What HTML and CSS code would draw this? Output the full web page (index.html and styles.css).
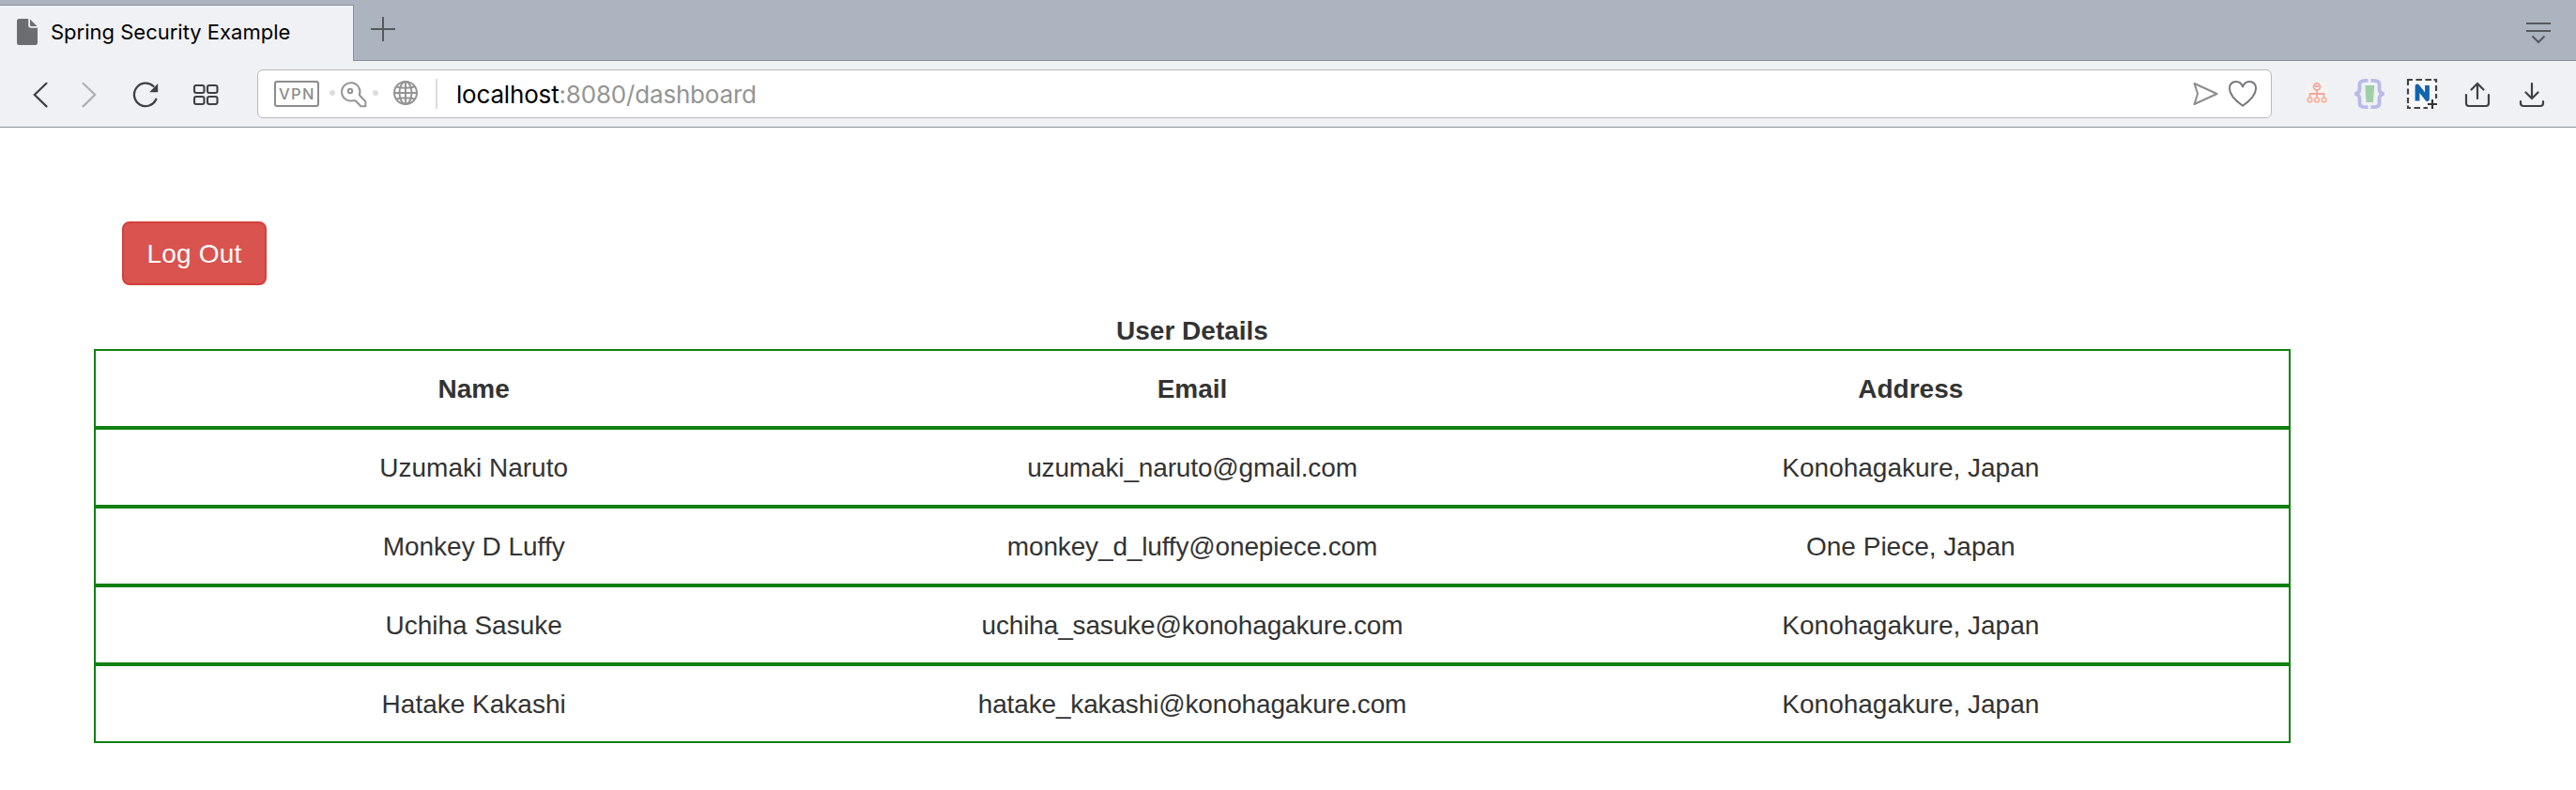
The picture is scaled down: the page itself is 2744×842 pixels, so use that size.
FILE: index.html
```html
<!DOCTYPE html>
<html lang="en">
<head>
<meta charset="utf-8">
<title>Spring Security Example</title>
<link rel="stylesheet" href="styles.css">
</head>
<body>
<header class="browser">
  <div class="tabstrip">
    <div class="tab">
      <svg class="doc" width="22" height="28" viewBox="18 20 22 28"><path fill="#6c6d70" d="M20.500 20H30.200V27Q30.200 29.800 33 29.800H40V45.500Q40 48 37.500 48H20.500Q18 48 18 45.500V22.500Q18 20 20.500 20ZM32 20.500L39.500 28H33.500Q32 28 32 26.500Z"/></svg>
      <span class="tab-title">Spring Security Example</span>
    </div>
    <svg class="plus" width="26" height="26" viewBox="395 18 26 26"><path d="M395 31H421M408 18V44" stroke="#55585d" stroke-width="2"/></svg>
    <svg class="menu" width="28" height="24" viewBox="2690 23 28 24"><path d="M2691 25H2717M2691 33H2717M2697.500 38.500L2704 45L2710.500 38.500" fill="none" stroke="#55585d" stroke-width="2"/></svg>
  </div>
  <div class="toolbar">
    <svg class="nav" width="20" height="40" viewBox="34 80 20 40"><path d="M49.500 88.800L36.800 101L49.500 113.400" fill="none" stroke="#3f4043" stroke-width="2.200" stroke-linecap="round"/></svg>
    <svg class="nav forward" width="20" height="40" viewBox="86 80 20 40"><path d="M88.500 88.800L101.200 101L88.500 113.400" fill="none" stroke="#adafb1" stroke-width="2.200" stroke-linecap="round"/></svg>
    <svg class="nav reload" width="30" height="40" viewBox="140 80 30 40"><path d="M163.500 92A12.200 12.200 0 1 0 166.300 105.800" fill="none" stroke="#3f4043" stroke-width="2.300" stroke-linecap="round"/><path d="M168.200 89V98.200H159.200Z" fill="#3f4043"/></svg>
    <svg class="nav grid" width="30" height="40" viewBox="204 80 30 40"><g fill="none" stroke="#3f4043" stroke-width="2.100"><rect x="207" y="91" width="10.500" height="8" rx="2"/><rect x="221" y="91" width="10.500" height="8" rx="2"/><rect x="207" y="103" width="10.500" height="8" rx="2"/><rect x="221" y="103" width="10.500" height="8" rx="2"/></g></svg>
    <div class="address">
      <span class="vpn">VPN</span>
      <svg class="site" width="100" height="40" viewBox="350 80 100 40"><g fill="none" stroke="#949494" stroke-width="2"><g fill="#dcdde0" stroke="none"><circle cx="354" cy="99" r="3"/><circle cx="400" cy="99" r="3"/></g><path stroke-linejoin="round" d="M376.300 107.200A9.700 9.700 0 1 1 382.800 101.300L389.400 108.300V113.300H384.500L378.600 107.200Z"/><circle cx="373" cy="97" r="2.200"/><circle cx="432" cy="99" r="12"/><ellipse cx="432" cy="99" rx="6.500" ry="12"/><path d="M432 87V111M420 99H444M422.500 92.500Q432 95 441.500 92.500M422.500 105.500Q432 103 441.500 105.500"/></g></svg>
      <span class="divider"></span>
      <span class="url">localhost<span class="path">:8080/dashboard</span></span>
      <svg class="actions" width="74" height="40" viewBox="2334 80 74 40"><g fill="none" stroke="#8c8c8e" stroke-width="2" stroke-linejoin="round"><path d="M2337.500 89L2361.500 100L2337.500 111L2341 100Z"/><path stroke="#77787a" d="M2389 112.800C2383 108.500 2375 101.500 2375 94.500C2375 89.500 2378 87 2382 87Q2387 87 2389 92.500Q2391 87 2396 87C2400 87 2403 89.500 2403 94.500C2403 101.500 2395 108.500 2389 112.800Z"/></g></svg>
    </div>
    <svg class="ext tree" width="24" height="40" viewBox="2456 80 24 40"><rect x="2456" y="88" width="24" height="23" rx="4" fill="#f5f3f2"/><g fill="none" stroke="#f0a79b" stroke-width="1.800"><circle cx="2468" cy="92.500" r="3.500"/><path d="M2468 96V104M2460.500 104V100H2475.500V104M2466 92H2470"/><g stroke="#f4b49f"><circle cx="2460.500" cy="106.500" r="2.300"/><circle cx="2468" cy="106.500" r="2.300"/><circle cx="2475.500" cy="106.500" r="2.300"/></g></g></svg>
    <svg class="ext braces" width="32" height="40" viewBox="2508 80 32 40"><path d="M2522.500 85.800H2519.500Q2513.500 85.800 2513.500 90V95Q2513.500 99 2508.500 100Q2513.500 101 2513.500 105V110Q2513.500 114.200 2519.500 114.200H2522.500M2525.500 85.800H2528.500Q2534.500 85.800 2534.500 90V95Q2534.500 99 2539.500 100Q2534.500 101 2534.500 105V110Q2534.500 114.200 2528.500 114.200H2525.500" fill="none" stroke="#b9b9ea" stroke-width="3.800"/><path d="M2519.300 91H2529.200L2528 109H2520.500Z" fill="#9fcfa8"/></svg>
    <svg class="ext clip" width="34" height="40" viewBox="2563 80 34 40"><path fill="#fff" fill-opacity=".5" d="M2565 85H2595V115H2565Z"/><path d="M2565 91V85H2570M2573.500 85H2580M2583.500 85H2590M2592.500 85H2595V88M2565 94.500V100.500M2565 104V110M2565 112.500V115H2568M2571.500 115H2578M2595 91V97M2595 100V105M2581.500 115H2586" fill="none" stroke="#444" stroke-width="2.200"/><path d="M2575 107.500V92L2585.500 105.500V91" fill="none" stroke="#1265ad" stroke-width="4.800" stroke-linejoin="round"/><path d="M2591 106V116M2586 111H2596" stroke="#333" stroke-width="2.200"/></svg>
    <svg class="ext upload" width="28" height="40" viewBox="2625 80 28 40"><path d="M2627 101V110Q2627 113 2630 113H2648Q2651 113 2651 110V101M2639 105V89M2632.500 95.500L2639 89L2645.500 95.500" fill="none" stroke="#3f4043" stroke-width="2.200" stroke-linecap="round"/></svg>
    <svg class="ext download" width="28" height="40" viewBox="2683 80 28 40"><path d="M2685 108V110Q2685 113 2688 113H2706Q2709 113 2709 110V108M2697 89V105M2690.500 98.500L2697 105L2703.500 98.500" fill="none" stroke="#3f4043" stroke-width="2.200" stroke-linecap="round"/></svg>
  </div>
</header>
<main class="page">
  <button class="logout" type="button">Log Out</button>
  <section class="users">
    <h1 class="caption">User Details</h1>
    <div class="row head"><span>Name</span><span>Email</span><span>Address</span></div>
    <div class="row"><span>Uzumaki Naruto</span><span class="email">uzumaki_naruto@gmail.com</span><span>Konohagakure, Japan</span></div>
    <div class="row"><span>Monkey D Luffy</span><span class="email">monkey_d_luffy@onepiece.com</span><span>One Piece, Japan</span></div>
    <div class="row"><span>Uchiha Sasuke</span><span class="email">uchiha_sasuke@konohagakure.com</span><span>Konohagakure, Japan</span></div>
    <div class="row"><span>Hatake Kakashi</span><span class="email">hatake_kakashi@konohagakure.com</span><span>Konohagakure, Japan</span></div>
  </section>
</main>
</body>
</html>
```
FILE: styles.css
```css
* { box-sizing: border-box; }
body { margin: 0; background: #fff; color: #333; font: 28px/40px "Liberation Sans", Arial, sans-serif; }
svg { display: block; flex: none; }
.browser { font-family: Inter, sans-serif; }
.tabstrip { display: flex; height: 65px; background: #abb4bf; border-bottom: 1px solid #87909b; }
.tab { display: flex; width: 377px; height: 60px; margin-top: 5px; padding: 15px 0 0 18px; background: #f0f1f4; border: solid #87909b; border-width: 1px 1px 0 0; }
.doc { margin-top: -1px; }
.tab-title { margin: -1px 0 0 14px; color: #000; font-size: 22px; line-height: 28px; white-space: nowrap; }
.plus { margin: 18px 0 0 18px; }
.menu { margin: 23px 26px 0 auto; }
.toolbar { display: flex; align-items: center; height: 71px; padding: 0 33px 0 34px; background: #f0f1f4; border-bottom: 1px solid #87909b; }
.forward { margin-left: 32px; }
.reload { margin-left: 34px; }
.grid { margin-left: 34px; }
.address { display: flex; flex: none; align-items: center; width: 2146px; height: 52px; margin-left: 40px; padding: 0 11px 0 17px; background: #fff; border: 1px solid #b8babe; border-radius: 6px; }
.vpn { width: 48px; height: 28px; border: 2px solid #8c8c8c; border-radius: 3px; color: #8c8c8c; font-size: 16.5px; font-weight: 500; line-height: 25px; letter-spacing: 1.3px; padding-left: 3px; }
.site { margin-left: 10px; }
.divider { width: 2px; height: 32px; margin-left: 14px; background: #dcdcdc; }
.url { margin-left: 20px; padding-top: 2px; color: #000; font-size: 26px; letter-spacing: -.18px; white-space: nowrap; }
.path { color: #949494; }
.actions { margin-left: auto; }
.tree { margin-left: 36px; }
.braces { margin-left: 28px; }
.clip { margin-left: 23px; }
.upload { margin-left: 28px; }
.download { margin-left: 30px; }
.page { padding: 100px 304px 50px 100px; }
.logout { display: block; width: 154px; height: 68px; margin-left: 30px; padding: 1px 0 0; background: #d9534f; border: 2px solid #d43f3a; border-radius: 8px; color: #fff; font: inherit; letter-spacing: .2px; }
.users { margin-top: 28px; text-align: center; }
.caption { margin: 0; font-size: 28px; line-height: 42px; height: 40px; }
.row { display: grid; grid-template-columns: repeat(3, 1fr); height: 84px; padding: 0 20px; border: 2px solid #108010; line-height: 81px; }
.head { font-weight: 700; }
.email { letter-spacing: -.15px; }
```
